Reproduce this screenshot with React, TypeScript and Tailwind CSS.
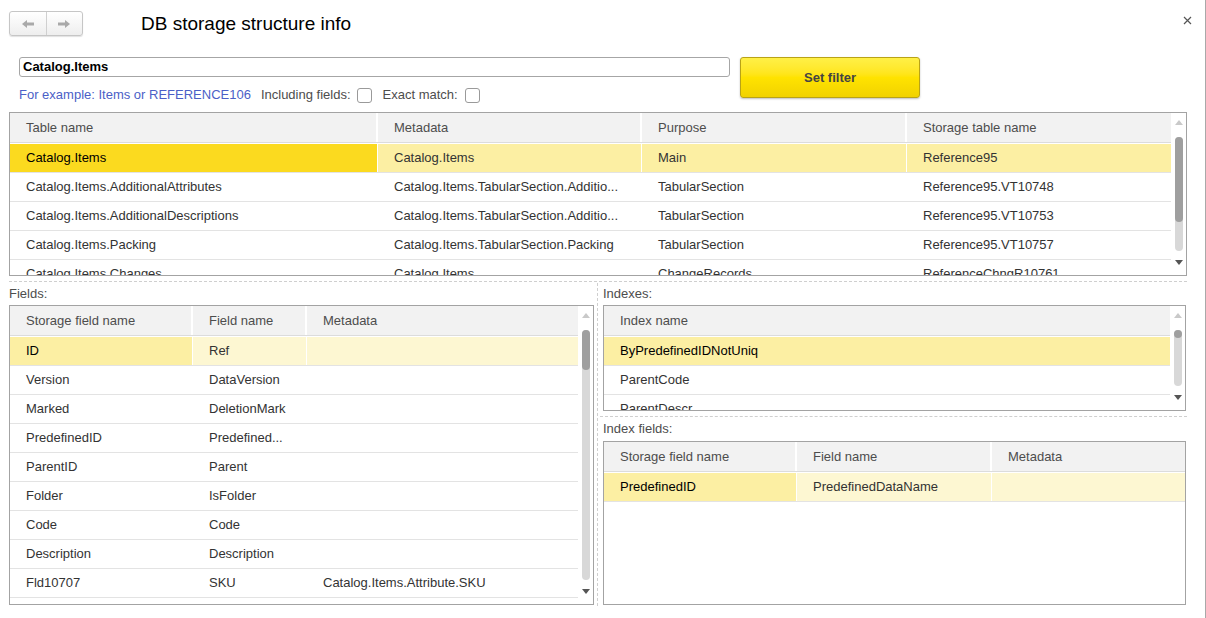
import React from "react";

type Col = { w?: string; label: string };
type Row = { cells: string[]; sel?: string[] };

const Y1 = "bg-[#fbda1f]"; // current cell
const Y2 = "bg-[#fcefa3]"; // selected row
const Y3 = "bg-[#fdf7d2]"; // selected row, pale

function ScrollBar({ thumb }: { thumb: string }) {
  return (
    <div className="flex w-[15px] flex-col items-center">
      <div className="flex h-[24px] justify-center pt-[7px]">
        <div className="h-0 w-0 border-x-[4px] border-b-[5px] border-x-transparent border-b-[#c9c9c9]" />
      </div>
      <div className="flex w-[8px] flex-1 flex-col rounded-full bg-[#d8d8d8]">
        <div className={`w-[8px] rounded-full bg-[#9f9f9f] ${thumb}`} />
      </div>
      <div className="flex h-[24px] justify-center pt-[9px]">
        <div className="h-0 w-0 border-x-[4px] border-t-[5px] border-x-transparent border-t-[#555]" />
      </div>
    </div>
  );
}

function Grid({
  cols,
  rows,
  className,
  thumb,
}: {
  cols: Col[];
  rows: Row[];
  className: string;
  thumb?: string;
}) {
  return (
    <div className={`flex overflow-hidden border border-[#a3a3a3] bg-white ${className}`}>
      <div className="flex min-w-0 flex-1 flex-col">
        <div className="flex h-[30px] shrink-0 border-b border-[#dcdcdc] bg-[#f2f2f2] text-[#4d4d4d]">
          {cols.map((c, i) => (
            <div
              key={i}
              className={`flex items-center pl-[16px] ${c.w ?? "flex-1"} ${
                i < cols.length - 1 ? "border-r-2 border-white" : ""
              }`}
            >
              {c.label}
            </div>
          ))}
        </div>
        <div className="pt-[1px]">
          {rows.map((r, ri) => (
            <div key={ri} className="flex h-[29px] shrink-0 border-b border-[#e3e3e3]">
              {r.cells.map((t, ci) => (
                <div
                  key={ci}
                  className={`flex items-center overflow-hidden whitespace-nowrap pl-[16px] ${
                    cols[ci].w ?? "flex-1"
                  } ${ci < cols.length - 1 ? "border-r border-white" : ""} ${
                    r.sel ? r.sel[ci] : ""
                  }`}
                >
                  {t}
                </div>
              ))}
            </div>
          ))}
        </div>
      </div>
      {thumb && <ScrollBar thumb={thumb} />}
    </div>
  );
}

function Check() {
  return <div className="h-[15px] w-[15px] rounded-[3px] border border-[#9a9a9a] bg-white" />;
}

export default function App() {
  return (
    <div className="relative h-[618px] w-[1206px] overflow-hidden border-r border-[#a9a9a9] bg-white font-['Liberation_Sans',Arial,sans-serif] text-[13px] text-[#333]">
      {/* title bar */}
      <div className="flex h-[36px] items-center pl-[9px] pt-[11px]">
        <div className="flex h-[25px] w-[74px] rounded-[3px] border border-[#c6c6c6] bg-gradient-to-b from-white to-[#eeeeee] shadow-[0_1px_1px_rgba(0,0,0,0.12)]">
          <div className="flex flex-1 items-center justify-center border-r border-[#d0d0d0]">
            <svg width="14" height="10" viewBox="0 0 14 10">
              <path d="M1 5L6 1v2.5h7v3H6V9z" fill="#a9a9a9" />
            </svg>
          </div>
          <div className="flex flex-1 items-center justify-center">
            <svg width="14" height="10" viewBox="0 0 14 10">
              <path d="M13 5L8 1v2.5H1v3h7V9z" fill="#a9a9a9" />
            </svg>
          </div>
        </div>
        <div className="ml-[58px] text-[19px] leading-none text-black">DB storage structure info</div>
        <svg className="absolute right-[13px] top-[16px]" width="9" height="9" viewBox="0 0 9 9">
          <path d="M1 1l7 7M8 1L1 8" stroke="#555" strokeWidth="1.2" />
        </svg>
      </div>

      {/* filter */}
      <div className="mt-[21px] flex pl-[19px]">
        <div className="w-[711px]">
          <div className="flex h-[20px] items-center rounded-[3px] border border-[#a6a6a6] pl-[3px] font-bold text-black">
            Catalog.Items
          </div>
          <div className="mt-[10px] flex h-[16px] items-center text-[#4d4d4d]">
            <span className="text-[#4b5fc7]">For example: Items or REFERENCE106</span>
            <span className="ml-[10px]">Including fields:</span>
            <span className="ml-[6px]">
              <Check />
            </span>
            <span className="ml-[11px]">Exact match:</span>
            <span className="ml-[7px]">
              <Check />
            </span>
          </div>
        </div>
        <div className="ml-[10px] flex h-[41px] w-[180px] items-center justify-center rounded-[3px] border border-[#b9a316] bg-gradient-to-b from-[#fff046] via-[#ffe300] to-[#f1d200] font-bold text-[#444] shadow-[0_1px_2px_rgba(0,0,0,0.25)]">
          Set filter
        </div>
      </div>

      {/* tables */}
      <Grid
        className="mx-[9px] mt-[9px] h-[164px] w-[1178px]"
        thumb="h-[85px]"
        cols={[
          { w: "w-[368px]", label: "Table name" },
          { w: "w-[264px]", label: "Metadata" },
          { w: "w-[265px]", label: "Purpose" },
          { label: "Storage table name" },
        ]}
        rows={[
          { cells: ["Catalog.Items", "Catalog.Items", "Main", "Reference95"], sel: [`${Y1} text-black`, Y2, Y2, Y2] },
          { cells: ["Catalog.Items.AdditionalAttributes", "Catalog.Items.TabularSection.Additio...", "TabularSection", "Reference95.VT10748"] },
          { cells: ["Catalog.Items.AdditionalDescriptions", "Catalog.Items.TabularSection.Additio...", "TabularSection", "Reference95.VT10753"] },
          { cells: ["Catalog.Items.Packing", "Catalog.Items.TabularSection.Packing", "TabularSection", "Reference95.VT10757"] },
          { cells: ["Catalog.Items.Changes", "Catalog.Items", "ChangeRecords", "ReferenceChngR10761"] },
        ]}
      />
      <div className="mx-[9px] mt-[5px] w-[1178px] border-t border-dashed border-[#cfcfcf]" />

      <div className="flex">
        <div className="ml-[9px] w-[585px]">
          <div className="flex h-[23px] items-center text-[#4d4d4d]">Fields:</div>
          <Grid
            className="h-[300px] w-[585px]"
            thumb="h-[40px]"
            cols={[
              { w: "w-[183px]", label: "Storage field name" },
              { w: "w-[114px]", label: "Field name" },
              { label: "Metadata" },
            ]}
            rows={[
              { cells: ["ID", "Ref", ""], sel: [`${Y2} text-black`, Y3, Y3] },
              { cells: ["Version", "DataVersion", ""] },
              { cells: ["Marked", "DeletionMark", ""] },
              { cells: ["PredefinedID", "Predefined...", ""] },
              { cells: ["ParentID", "Parent", ""] },
              { cells: ["Folder", "IsFolder", ""] },
              { cells: ["Code", "Code", ""] },
              { cells: ["Description", "Description", ""] },
              { cells: ["Fld10707", "SKU", "Catalog.Items.Attribute.SKU"] },
            ]}
          />
        </div>
        <div className="ml-[3px] mt-[1px] h-[323px] border-l border-dashed border-[#cfcfcf]" />
        <div className="flex flex-col">
          <div className="ml-[5px] flex h-[23px] items-center text-[#4d4d4d]">Indexes:</div>
          <Grid
            className="ml-[5px] h-[106px] w-[583px]"
            thumb="h-[8px]"
            cols={[{ label: "Index name" }]}
            rows={[
              { cells: ["ByPredefinedIDNotUniq"], sel: [`${Y2} text-black`] },
              { cells: ["ParentCode"] },
              { cells: ["ParentDescr"] },
            ]}
          />
          <div className="ml-[2px] mt-[5px] w-[587px] border-t border-dashed border-[#cfcfcf]" />
          <div className="ml-[5px] flex h-[24px] items-center text-[#4d4d4d]">Index fields:</div>
          <Grid
            className="ml-[5px] h-[164px] w-[583px]"
            cols={[
              { w: "w-[193px]", label: "Storage field name" },
              { w: "w-[195px]", label: "Field name" },
              { label: "Metadata" },
            ]}
            rows={[{ cells: ["PredefinedID", "PredefinedDataName", ""], sel: [`${Y2} text-black`, Y3, Y3] }]}
          />
        </div>
      </div>
    </div>
  );
}
